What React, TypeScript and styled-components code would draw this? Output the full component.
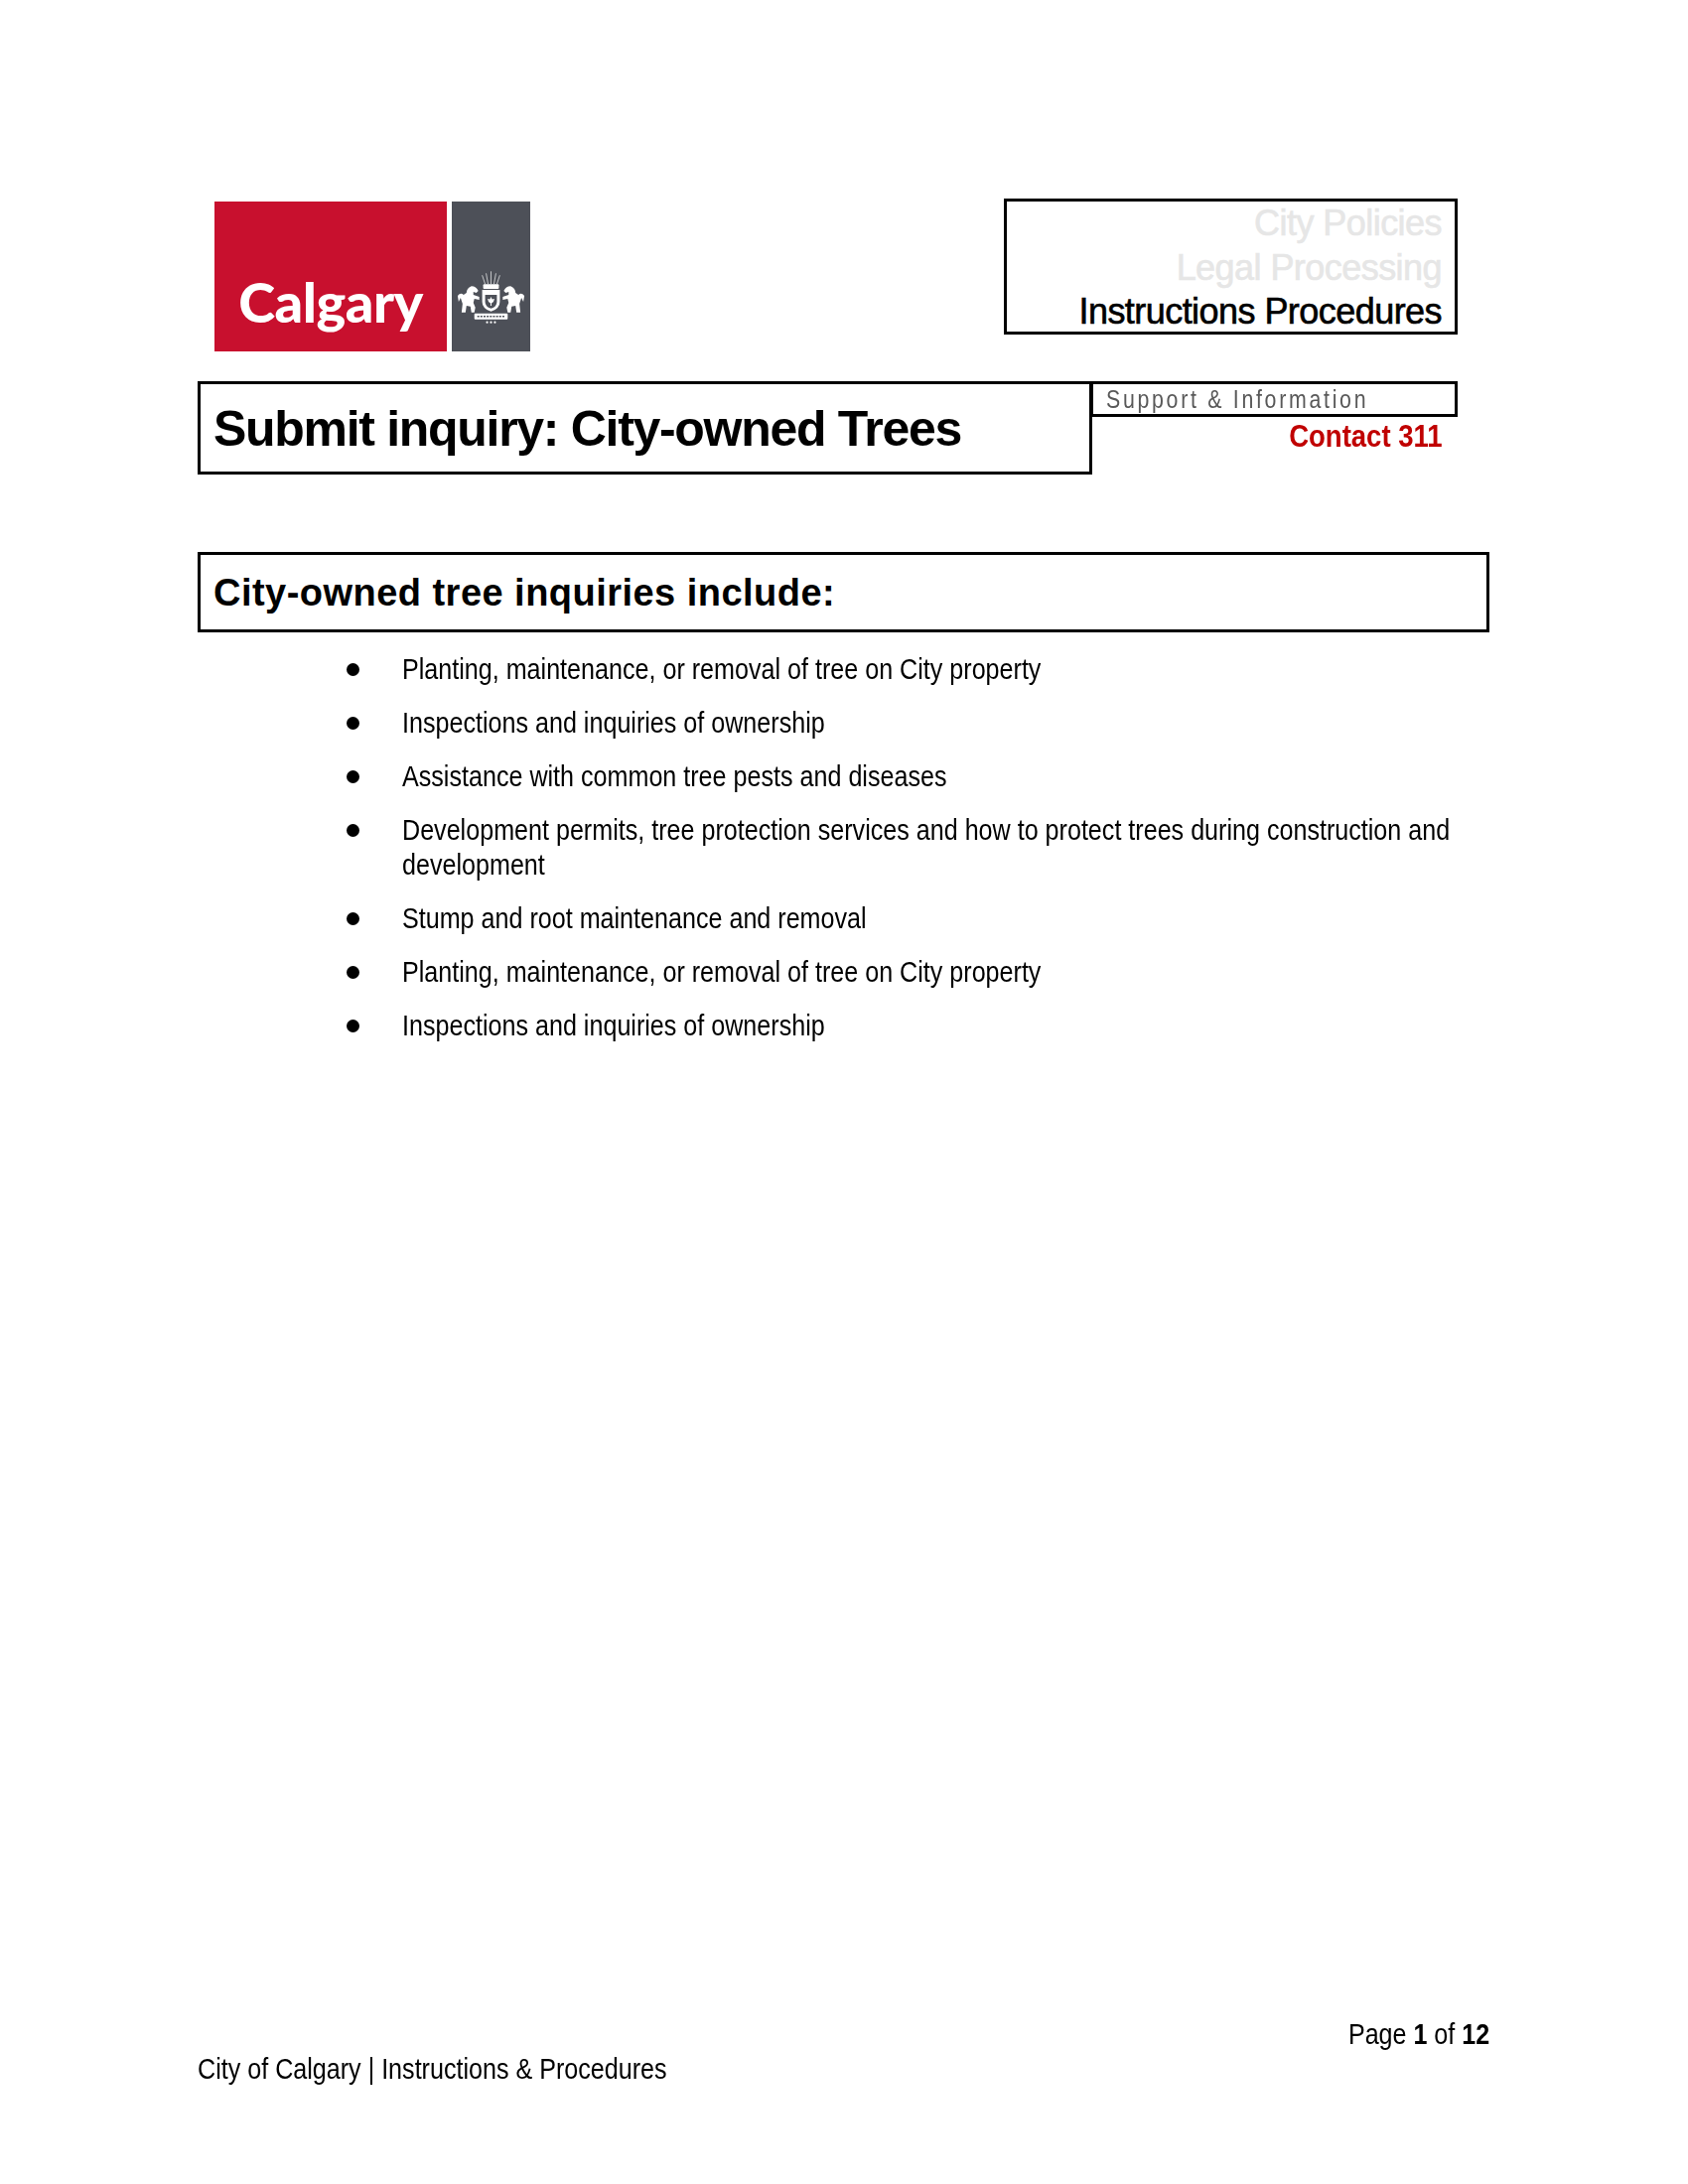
import React from 'react';
import styled, { createGlobalStyle } from 'styled-components';

const GlobalStyle = createGlobalStyle`
  html, body {
    margin: 0;
    padding: 0;
    background: #fff;
  }
`;

const Page = styled.div`
  width: 1700px;
  height: 2200px;
  box-sizing: border-box;
  padding: 200px 200px 99px 199px;
  display: flex;
  flex-direction: column;
  font-family: "Liberation Sans", Arial, sans-serif;
  color: #000;
`;

// The document uses Arial Narrow, which is not installed: squeeze Liberation Sans instead
const Narrow = styled.span<{ $scale: number; $right?: boolean }>`
  display: inline-block;
  white-space: nowrap;
  transform: scaleX(${(p) => p.$scale});
  transform-origin: ${(p) => (p.$right ? 'right' : 'left')} center;
`;

const TopRow = styled.div`
  display: flex;
  justify-content: space-between;
  width: 1269px;
  height: 184px;
`;

const Logo = styled.div`
  display: flex;
  gap: 5px;
  height: 151px;
  margin: 3px 0 0 17px;
`;

const LogoRed = styled.div`
  width: 234px;
  background: #c8102e;
  display: flex;
  align-items: flex-end;
  justify-content: center;
  box-sizing: border-box;
  padding-bottom: 20px;
`;

const LogoWord = styled.span`
  font-family: "Lato", "Open Sans", sans-serif;
  font-weight: 900;
  font-size: 56px;
  line-height: 60px;
  letter-spacing: -0.5px;
  color: #fff;
`;

const LogoGray = styled.div`
  width: 79px;
  background: #4d5058;
  display: flex;
  align-items: flex-end;
  justify-content: center;
  padding-bottom: 26px;
  box-sizing: border-box;
`;

const CrestSvg = styled.svg`
  flex: none;
  display: block;
  filter: blur(0.4px);
`;

const DocTypeBox = styled.div`
  width: 457px;
  height: 137px;
  box-sizing: border-box;
  border: 3px solid #000;
  padding: 0 13px 0 0;
  text-align: right;
`;

const DocType = styled.div<{ $active?: boolean }>`
  font-size: 36px;
  line-height: 44.5px;
  letter-spacing: -0.55px;
  color: ${(p) => (p.$active ? '#000' : '#e6e6e6')};
  -webkit-text-stroke: 0.6px currentColor;
`;

const TitleRow = styled.div`
  display: flex;
  width: 1269px;
`;

const TitleBox = styled.div`
  width: 901px;
  height: 94px;
  box-sizing: border-box;
  border: 3px solid #000;
  padding: 2px 0 0 13px;
  display: flex;
  align-items: center;
`;

const Title = styled.h1`
  margin: 0;
  font-size: 50px;
  font-weight: 700;
  letter-spacing: -1.3px;
`;

const SupportColumn = styled.div`
  flex: 1;
  margin-left: -2px;
`;

const SupportBox = styled.div`
  height: 36px;
  box-sizing: border-box;
  border: 3px solid #000;
  padding-left: 13px;
  font-size: 26px;
  line-height: 31px;
  letter-spacing: 3.3px;
  color: #595959;
`;

const ContactLine = styled.div`
  text-align: right;
  padding: 0 15px 0 0;
  font-size: 32px;
  line-height: 38px;
  font-weight: 700;
  color: #c00000;
`;

const SectionBox = styled.div`
  width: 1301px;
  height: 81px;
  margin-top: 78px;
  box-sizing: border-box;
  border: 3px solid #000;
  padding: 2px 0 0 13px;
  display: flex;
  align-items: center;
`;

const SectionTitle = styled.h2`
  margin: 0;
  font-size: 38px;
  font-weight: 700;
  letter-spacing: 0.47px;
`;

const List = styled.ul`
  list-style: none;
  margin: 19px 0 0;
  padding: 0 0 0 150px;
  width: 1290px;
  box-sizing: border-box;
  display: flex;
  flex-direction: column;
  gap: 19px;
`;

const Item = styled.li`
  display: flex;
  font-size: 30px;
  line-height: 35px;
`;

const Bullet = styled.span`
  flex: none;
  width: 13px;
  height: 13px;
  margin: 12px 43px 0 0;
  border-radius: 50%;
  background: #000;
`;

const ItemText = styled.span`
  flex: none;
  width: 1290px;
  transform: scaleX(0.837);
  transform-origin: left center;
`;

const Footer = styled.div`
  margin-top: auto;
  display: flex;
  justify-content: space-between;
  align-items: flex-end;
  width: 1301px;
  font-size: 30px;
  line-height: 35px;
`;

const PageCount = styled.div`
  padding-bottom: 35px;
`;

const items = [
  'Planting, maintenance, or removal of tree on City property',
  'Inspections and inquiries of ownership',
  'Assistance with common tree pests and diseases',
  'Development permits, tree protection services and how to protect trees during construction and development',
  'Stump and root maintenance and removal',
  'Planting, maintenance, or removal of tree on City property',
  'Inspections and inquiries of ownership',
];

const horse =
  'M20 20 Q25 20 27 25 L25 27 L22 26 L22 29 L28 31 L28 34 L23 33 L22 37 L24 42 L23 47 L20 47 L19 41 L15 40 L14 47 L10 47 L11 38 L9 32 L7 36 L6 30 Q9 26 12 29 L15 27 Q15 22 20 20 Z';

// City crest: crown rays, shield with leaf, two rearing horses, motto scroll
const Crest = () => (
  <CrestSvg width="79" height="60" viewBox="0 0 80 60" fill="#fff">
    <g stroke="#fff" strokeWidth="0.9" opacity="0.75">
      <path d="M40 18 V5 M37 18 L35 7 M43 18 L45 7 M34 18 L31 9 M46 18 L49 9" />
    </g>
    <rect x="32" y="18" width="16" height="5" rx="1" />
    <path d="M31 24 H49 V36 Q49 43 40 46 Q31 43 31 36 Z" />
    <path d="M34 29 H46 V36 Q46 41 40 43 Q34 41 34 36 Z" fill="#4d5058" />
    <path d="M40 31 L41.2 33.5 L43.5 33 L42.5 36 L40.5 37.5 V40 H39.5 V37.5 L37.5 36 L36.5 33 L38.8 33.5 Z" />
    <path d={horse} />
    <path d={horse} transform="translate(80 0) scale(-1 1)" />
    <rect x="23" y="48" width="34" height="6" rx="1" />
    <path d="M26 51 H54" stroke="#4d5058" strokeWidth="1.5" strokeDasharray="2 1.2" />
    <circle cx="36" cy="57" r="1.1" />
    <circle cx="40" cy="57" r="1.1" />
    <circle cx="44" cy="57" r="1.1" />
  </CrestSvg>
);

export default function App() {
  return (
    <>
      <GlobalStyle />
      <Page>
        <TopRow>
          <Logo>
            <LogoRed>
              <LogoWord>Calgary</LogoWord>
            </LogoRed>
            <LogoGray>
              <Crest />
            </LogoGray>
          </Logo>
          <DocTypeBox>
            <DocType>City Policies</DocType>
            <DocType>Legal Processing</DocType>
            <DocType $active>Instructions Procedures</DocType>
          </DocTypeBox>
        </TopRow>
        <TitleRow>
          <TitleBox>
            <Title>Submit inquiry: City-owned Trees</Title>
          </TitleBox>
          <SupportColumn>
            <SupportBox>
              <Narrow $scale={0.82}>Support &amp; Information</Narrow>
            </SupportBox>
            <ContactLine>
              <Narrow $scale={0.86} $right>Contact 311</Narrow>
            </ContactLine>
          </SupportColumn>
        </TitleRow>
        <SectionBox>
          <SectionTitle>City-owned tree inquiries include:</SectionTitle>
        </SectionBox>
        <List>
          {items.map((text, i) => (
            <Item key={i}>
              <Bullet />
              <ItemText>{text}</ItemText>
            </Item>
          ))}
        </List>
        <Footer>
          <Narrow $scale={0.837}>City of Calgary | Instructions &amp; Procedures</Narrow>
          <PageCount>
            <Narrow $scale={0.836} $right>
              Page <b>1</b> of <b>12</b>
            </Narrow>
          </PageCount>
        </Footer>
      </Page>
    </>
  );
}
